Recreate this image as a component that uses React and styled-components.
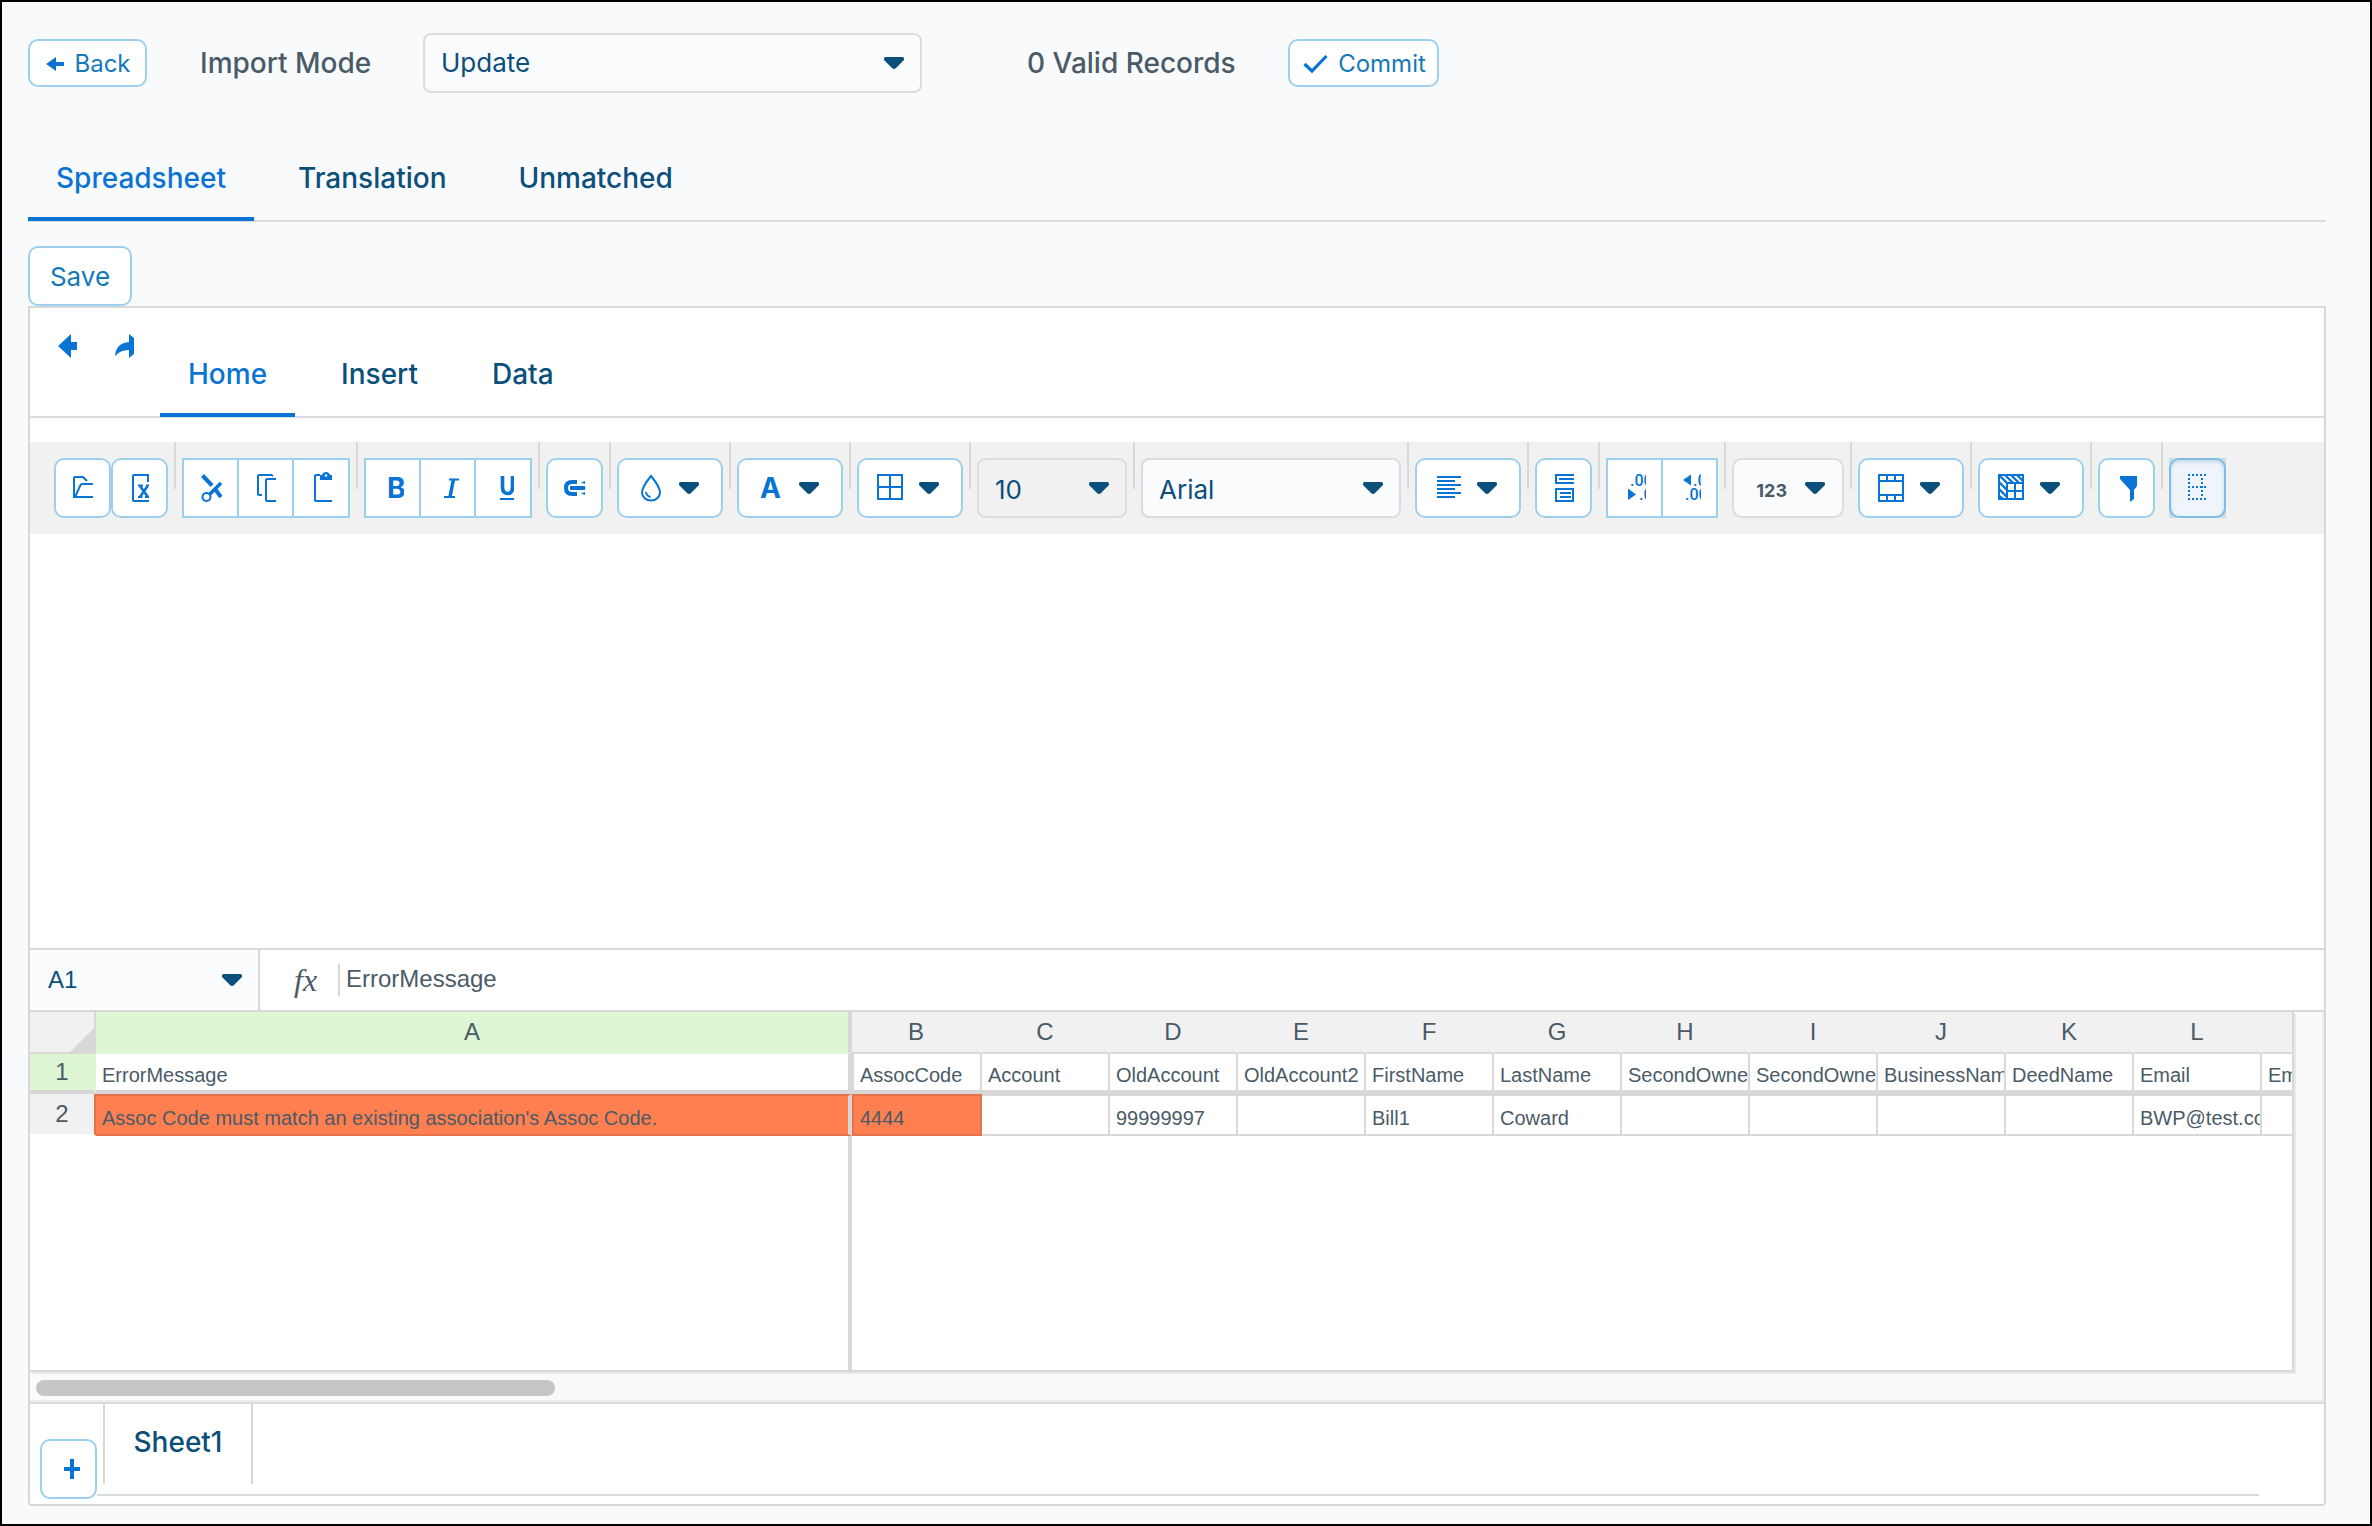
import React, { useState } from "react";
import styled, { createGlobalStyle, css } from "styled-components";

const c = {
  page: "#f9fafc",
  line: "#d8d8d8",
  coolLine: "#d9dde0",
  blue: "#0a74d4",
  link: "#1479b8",
  navy: "#0b4f7b",
  slate: "#4a5b67",
  buttonLine: "#9dd0ee",
  bar: "#f1f1f1",
  green: "#def6d3",
  error: "#ff7f50",
  errorLine: "#e57248",
};
const ui = `Inter, "Liberation Sans", sans-serif`;
const sheet = `"Liberation Sans", Arial, sans-serif`;

const Global = createGlobalStyle`
  * { box-sizing: border-box; }
  body { margin: 0; background: ${c.page}; font-family: ${ui}; color: ${c.slate}; }
  button, select, input { font-family: inherit; margin: 0; }
  button, select { cursor: pointer; }
  svg { display: block; flex: none; }
`;

const Page = styled.main`
  min-height: 100vh;
  border: 2px solid #000;
  padding: 31px 44px 18px 26px;
  background: ${c.page};
`;

const TopRow = styled.header`
  display: grid;
  grid-template-columns: 172px 223px 499px 366px auto;
  align-items: center;
  justify-content: start;
  height: 60px;
`;
const TopLabel = styled.label`
  font-size: 28px;
  line-height: 34px;
  font-weight: 500;
`;
const RecordCount = styled.span`
  padding-left: 105px;
  font-size: 28px;
  line-height: 34px;
  font-weight: 500;
`;
const buttonFace = css`
  border: 2px solid ${c.buttonLine};
  border-radius: 10px;
  background: #fff;
  color: ${c.link};
`;
const ActionButton = styled.button`
  ${buttonFace}
  display: inline-flex;
  align-items: center;
  justify-content: center;
  justify-self: start;
  gap: 10px;
  width: ${(p) => p.$width}px;
  height: 48px;
  padding: 2px 0 0 2px;
  font-size: 24px;
  line-height: 30px;
`;
const SaveButton = styled.button`
  ${buttonFace}
  display: block;
  width: 104px;
  height: 60px;
  margin-top: 24px;
  padding: 2px 0 0;
  font-size: 26px;
  line-height: 32px;
`;

const SelectBox = styled.span`
  position: relative;
  display: flex;
  align-items: center;
  width: ${(p) => (p.$width ? p.$width + "px" : "100%")};
  flex: none;
  > svg {
    position: absolute;
    right: ${(p) => p.$inset || 18}px;
    pointer-events: none;
  }
`;
const Select = styled.select`
  appearance: none;
  width: 100%;
  height: 60px;
  padding: 0 50px 0 16px;
  border: 2px solid ${c.coolLine};
  border-radius: 8px;
  background: ${(p) => (p.$flat ? c.bar : "#fafbfd")};
  color: ${c.navy};
  font-size: 26px;
  line-height: 32px;
`;

const Tabs = styled.div`
  display: flex;
  gap: ${(p) => p.$gap}px;
  height: 89px;
  border-bottom: 2px solid ${(p) => (p.$bare ? "transparent" : c.coolLine)};
  margin-top: ${(p) => p.$top || 0}px;
`;
const Tab = styled.button`
  height: 88px;
  padding: 2px 28px 0;
  border: 0;
  border-bottom: 4px solid ${(p) => (p.$active ? c.blue : "transparent")};
  border-top: 4px solid transparent;
  background: none;
  color: ${(p) => (p.$active ? c.blue : c.navy)};
  font-size: 28px;
  line-height: 34px;
  font-weight: 500;
`;

const Panel = styled.section`
  border: 2px solid ${c.line};
  border-radius: 0 0 4px 4px;
  background: #fff;
`;
const RibbonHead = styled.div`
  display: flex;
  align-items: flex-end;
  height: 110px;
  padding-left: 10px;
  border-bottom: 2px solid ${c.coolLine};
`;
const History = styled.div`
  display: flex;
  align-self: flex-start;
  margin-right: 6px;
`;
const HistoryButton = styled.button`
  width: 57px;
  height: 76px;
  padding: 0 0 0 10px;
  border: 0;
  background: none;
  color: ${c.blue};
`;
const RibbonTabs = styled(Tabs)`
  margin-bottom: -2px;
`;

const Toolbar = styled.div`
  display: flex;
  align-items: flex-start;
  height: 92px;
  margin-top: 24px;
  padding: 16px 24px;
  background: ${c.bar};
  select { padding-top: 3px; }
`;
const Separator = styled.span`
  flex: none;
  width: 2px;
  height: 47px;
  margin: -16px 6px 0;
  background: ${c.line};
`;
const Pair = styled.div`
  display: flex;
`;
const ToolButton = styled.button`
  ${buttonFace}
  flex: none;
  display: flex;
  align-items: center;
  width: 57px;
  height: 60px;
  padding: 0 0 0 10px;
  color: ${c.blue};
  ${(p) =>
    p.$pressed &&
    css`
      border-color: #7fbde3;
      background: #eff5fa;
      box-shadow: inset 0 2px 4px #c3d9e8;
    `}
`;
const Group = styled.div`
  display: flex;
  ${ToolButton} {
    border-radius: 0;
  }
  ${ToolButton} + ${ToolButton} {
    width: 55px;
    border-left: 0;
  }
  ${ToolButton}:nth-child(3) {
    width: 56px;
  }
`;
const PressedFrame = styled.span`
  flex: none;
  background: #c8dcea;
`;
const DropButton = styled(ToolButton)`
  width: 106px;
  gap: 12px;
  padding-left: 16px;
`;
const FormatButton = styled(DropButton)`
  width: 112px;
  justify-content: flex-end;
  gap: 18px;
  padding: 6px 17px 0 0;
  border-color: ${c.coolLine};
  background: #fafbfd;
  color: ${c.slate};
  font-size: 18px;
  line-height: 24px;
  font-weight: 700;
  svg { margin-bottom: 6px; }
`;

const Blank = styled.div`
  height: 414px;
`;

const FormulaBar = styled.div`
  display: flex;
  align-items: center;
  height: 64px;
  border-top: 2px solid ${c.line};
  border-bottom: 2px solid ${c.line};
`;
const NameBox = styled(SelectBox)`
  height: 60px;
  border-right: 2px solid ${c.line};
  padding: 2px;
`;
const NameSelect = styled(Select)`
  height: 56px;
  border: 0;
  border-radius: 0;
  font-family: ${sheet};
  font-size: 24px;
`;
const Fx = styled.label`
  width: 78px;
  padding-left: 34px;
  font: italic 32px/32px "Liberation Serif", serif;
`;
const FormulaInput = styled.input`
  flex: 1;
  height: 32px;
  padding: 0 0 3px 6px;
  border: 0;
  border-left: 2px solid ${c.line};
  outline: 0;
  background: none;
  color: ${c.slate};
  && { font-family: ${sheet}; }
  font-size: 24px;
`;

const SheetArea = styled.div`
  padding-right: 28px;
  border-right: 2px solid #ededed;
  border-bottom: 2px solid #ededed;
  background: #fafafa;
`;
const Pane = styled.div`
  overflow: hidden;
  height: 360px;
  border-right: 2px solid ${c.line};
  border-bottom: 2px solid ${c.line};
  box-shadow: 2px 2px 0 #e8e8e8;
  background: #fff;
`;
const Grid = styled.table`
  table-layout: fixed;
  width: 2360px;
  border-collapse: separate;
  border-spacing: 0;
  font-family: ${sheet};
  color: ${c.slate};
`;
const Col = styled.col`
  width: ${(p) => p.$width}px;
`;
const headCell = css`
  padding: 0;
  font-size: 24px;
  line-height: 28px;
  font-weight: 400;
  text-align: center;
  vertical-align: middle;
  background: ${(p) => (p.$on ? c.green : c.bar)};
`;
const Corner = styled.td`
  ${headCell}
  height: 42px;
  border-right: 2px solid ${c.line};
  border-bottom: 2px solid ${c.line};
  vertical-align: bottom;
  svg { margin-left: auto; }
`;
const ColHead = styled.th`
  ${headCell}
  height: 42px;
  border-bottom: 2px solid ${(p) => (p.$on ? c.green : c.line)};
  border-right: ${(p) => (p.$on ? `4px solid ${c.line}` : `2px solid ${c.bar}`)};
`;
const RowHead = styled.th`
  ${headCell}
  border-right: 2px solid ${(p) => (p.$on ? c.green : c.errorLine)};
  border-bottom: ${(p) => (p.$on ? `4px solid ${c.line}` : "2px solid #fff")};
`;
const Cell = styled.td`
  height: ${(p) => (p.$top ? 40 : 42)}px;
  padding: 0 0 ${(p) => (p.$top ? 3 : 4)}px 6px;
  overflow: hidden;
  white-space: nowrap;
  vertical-align: bottom;
  font-size: 20px;
  line-height: 24px;
  border: 0 solid ${c.line};
  border-right-width: 2px;
  border-bottom-width: ${(p) => (p.$top ? 4 : 2)}px;
  border-top-width: ${(p) => (p.$top ? 0 : 2)}px;
  &:nth-child(2) { border-right-width: 4px; }
  &:nth-child(3) { border-left-width: 2px; }
  ${(p) =>
    p.$error &&
    css`
      background: ${c.error};
      border-top-color: ${c.errorLine};
      border-bottom-color: ${c.errorLine};
      &:nth-child(3) { border-color: ${c.errorLine}; }
    `}
`;
const Rest = styled.td`
  height: 236px;
  padding: 0;
  border-right: ${(p) => (p.$frozen ? `4px solid ${c.line}` : 0)};
`;
const Track = styled.div`
  height: 28px;
  padding: 8px 6px 4px;
`;
const Thumb = styled.div`
  width: 519px;
  height: 16px;
  border-radius: 8px;
  background: #c6c6c6;
`;

const SheetBar = styled.footer`
  display: flex;
  height: 102px;
  padding: 0 65px 0 10px;
  border-top: 2px solid ${c.coolLine};
`;
const AddSheet = styled(ToolButton)`
  margin-top: 35px;
`;
const SheetStrip = styled.div`
  flex: 1;
  height: 92px;
  padding-left: 6px;
  border-bottom: 2px solid ${c.coolLine};
`;
const SheetTab = styled.button`
  width: 150px;
  height: 80px;
  padding: 0 0 4px;
  border: 0 solid ${c.line};
  border-width: 0 2px;
  background: #fff;
  color: ${c.navy};
  font-size: 28px;
  line-height: 34px;
  font-weight: 500;
`;

const Caret = () => (
  <svg width="20" height="12" viewBox="0 0 20 12" fill={c.navy} aria-hidden="true">
    <path d="M1.5 0H18.5Q20 0 20 1.6V3L12 11Q10 13 8 11L0 3V1.6Q0 0 1.5 0Z" />
  </svg>
);
const Glyph = ({ wide, children }) => (
  <svg
    width={wide ? 32 : 28}
    height="32"
    viewBox={wide ? "0 0 32 32" : "0 0 28 32"}
    fill="none"
    stroke="currentColor"
    strokeWidth="2"
    aria-hidden="true"
  >
    {children}
  </svg>
);
const Letters = ({ x, y, size, light, children }) => (
  <text
    x={x}
    y={y}
    fontSize={size}
    fontWeight={light ? 500 : 700}
    fill="currentColor"
    stroke="none"
    fontFamily={light ? "Roboto, sans-serif" : "Inter, sans-serif"}
  >
    {children}
  </text>
);

const icons = {
  undo: <path d="M8 16 21 4V12H27V20H21V28Z" fill="currentColor" stroke="none" />,
  redo: <path d="M22 4 27 8V24L22 28V20Q13 20 8 26Q9 13 22 12Z" fill="currentColor" stroke="none" />,
  open: <path d="M27 25H8V6Q8 5 9 5H17L21 9M9 25 14.500 13Q15 12 16 12H27" />,
  excel: (
    <>
      <path d="M26 29H11Q10 29 10 28V4Q10 3 11 3H25V10" />
      <path d="M17 14 25 25M24.500 14 17 25" strokeWidth="2.600" />
      <path d="M15 13.500H20M23 13.500H26M15 25H19.500M22 25H26" />
    </>
  ),
  cut: (
    <>
      <path d="M8.500 3.500 18 13.500" strokeWidth="4" />
      <path d="M15.500 22.500 27 11" strokeWidth="3.500" />
      <path d="M21 17 27 25" strokeWidth="4" />
      <circle cx="12.500" cy="25" r="4" />
    </>
  ),
  copy: (
    <>
      <path d="M24 4 22.500 3H10Q9 3 9 4V22Q9 23 10 23H13" />
      <path d="M27 7H18Q17 7 17 8V28Q17 29 18 29H27" />
    </>
  ),
  paste: (
    <>
      <path d="M28 29H12Q11 29 11 28V4Q11 3 12 3H16" />
      <path d="M16 3H18Q19 0 22 0Q25 0 26 3H28V8H16Z" fill="currentColor" stroke="none" />
      <circle cx="22" cy="3.500" r="1.200" fill="#fff" stroke="none" />
    </>
  ),
  bold: <Letters x="11" y="26" size="28">B</Letters>,
  italic: (
    <>
      <path d="M18 7.500H28M13 25H24" />
      <path d="M22.500 7 19 25" strokeWidth="3.500" />
    </>
  ),
  underline: (
    <>
      <path d="M16.500 4V15Q16.500 21.500 22 21.500Q26.500 21.500 26.500 15V4" strokeWidth="3.600" />
      <path d="M14 27H28" />
    </>
  ),
  link: (
    <>
      <path d="M19 10H14Q8 10 8 16Q8 22 14 22H19" strokeWidth="4" />
      <path d="M12 16H27" strokeWidth="4" />
      <path d="M23 10.500 27 9V12ZM23 21.500 27 20V23Z" fill="currentColor" stroke="none" />
    </>
  ),
  drop: (
    <>
      <path d="M16 4Q7 15 7 20.500A9 8 0 0 0 25 20.500Q25 15 16 4Z" />
      <path d="M11 20Q11.500 24 15.500 25" />
    </>
  ),
  letter: <Letters x="5" y="26" size="28">A</Letters>,
  borders: <path d="M3 3H27V27H3ZM15 3V27M3 15H27" />,
  align: <path d="M4 5H28M4 9H22M4 13H28M4 17H22M4 21H28M4 25H22" />,
  merge: (
    <>
      <path d="M27 3H9V11H27M12 7H27" />
      <path d="M9 17H26V29H9ZM13 21H24M13 25H24" />
    </>
  ),
  lessDecimal: (
    <>
      <Letters light x="12" y="14" size="16">.00</Letters>
      <path d="M10 16.500 18 22.500 10 28Z" fill="currentColor" stroke="none" />
      <Letters light x="21" y="28" size="16">.0</Letters>
    </>
  ),
  moreDecimal: (
    <>
      <path d="M18 2.500 10 8 18 13.500Z" fill="currentColor" stroke="none" />
      <Letters light x="20" y="14" size="16">.0</Letters>
      <Letters light x="12" y="28" size="16">.00</Letters>
    </>
  ),
  table: <path d="M3 3H27V29H3ZM3 9H27M3 23H27M11 3V9M19 3V9M11 23V29M19 23V29" />,
  hatch: (
    <>
      <path d="M3 3H27V27H3ZM11 11H27M11 11V27M19 11V27M11 19H27" />
      <path d="M3 3 11 11M9 3 17 11M15 3 23 11M21 3 27 9M3 10 11 18M3 17 11 25M3 24 7 27" strokeWidth="2.400" />
    </>
  ),
  filter: <path d="M10 4H27V14L24 18V27L20 30V18L10 7Z" fill="currentColor" stroke="none" />,
  gridlines: <path d="M7 3H26M7 15H26M7 27H26M8 6V25M21 6V25" strokeDasharray="2 2" />,
  plus: <path d="M20 6V26M12 16H28" strokeWidth="4" />,
};

const Tool = ({ icon, label, ...rest }) => (
  <ToolButton aria-label={label} {...rest}>
    <Glyph>{icons[icon]}</Glyph>
  </ToolButton>
);
const DropTool = ({ icon, label }) => (
  <DropButton aria-label={label} aria-haspopup="menu">
    <Glyph wide>{icons[icon]}</Glyph>
    <Caret />
  </DropButton>
);

const columns = "ABCDEFGHIJKLM".split("");
const headings = [
  "ErrorMessage", "AssocCode", "Account", "OldAccount", "OldAccount2", "FirstName", "LastName",
  "SecondOwner", "SecondOwner", "BusinessName", "DeedName", "Email", "Email2",
];
const record = [
  "Assoc Code must match an existing association's Assoc Code.", "4444", "", "99999997", "", "Bill1",
  "Coward", "", "", "", "", "BWP@test.com", "",
];

export default function App() {
  const [view, setView] = useState("Spreadsheet");
  const [ribbon, setRibbon] = useState("Home");
  const [formula, setFormula] = useState("ErrorMessage");

  return (
    <>
      <Global />
      <Page>
        <TopRow>
          <ActionButton $width={119}>
            <svg width="18" height="14" viewBox="0 0 18 14" fill={c.blue} aria-hidden="true">
              <path d="M0 7 10 0V5H18V9H10V14Z" />
            </svg>
            Back
          </ActionButton>
          <TopLabel htmlFor="mode">Import Mode</TopLabel>
          <SelectBox>
            <Select id="mode">
              <option>Update</option>
            </Select>
            <Caret />
          </SelectBox>
          <RecordCount>0 Valid Records</RecordCount>
          <ActionButton $width={151}>
            <svg width="25" height="20" viewBox="0 0 25 20" fill="none" stroke={c.blue} strokeWidth="3.200" aria-hidden="true">
              <path d="M1.500 10 9 17 23.500 2" />
            </svg>
            Commit
          </ActionButton>
        </TopRow>

        <Tabs role="tablist" $top={40} $gap={16}>
          {["Spreadsheet", "Translation", "Unmatched"].map((name) => (
            <Tab key={name} role="tab" aria-selected={view === name} $active={view === name} onClick={() => setView(name)}>
              {name}
            </Tab>
          ))}
        </Tabs>

        <SaveButton>Save</SaveButton>

        <Panel>
          <RibbonHead>
            <History>
              <HistoryButton aria-label="Undo"><Glyph>{icons.undo}</Glyph></HistoryButton>
              <HistoryButton aria-label="Redo"><Glyph>{icons.redo}</Glyph></HistoryButton>
            </History>
            <RibbonTabs role="tablist" $bare $gap={18}>
              {["Home", "Insert", "Data"].map((name) => (
                <Tab key={name} role="tab" aria-selected={ribbon === name} $active={ribbon === name} onClick={() => setRibbon(name)}>
                  {name}
                </Tab>
              ))}
            </RibbonTabs>
          </RibbonHead>

          <Toolbar role="toolbar" aria-label="Formatting">
            <Pair>
              <Tool icon="open" label="Open" />
              <Tool icon="excel" label="Export to Excel" />
            </Pair>
            <Separator />
            <Group>
              <Tool icon="cut" label="Cut" />
              <Tool icon="copy" label="Copy" />
              <Tool icon="paste" label="Paste" />
            </Group>
            <Separator />
            <Group>
              <Tool icon="bold" label="Bold" />
              <Tool icon="italic" label="Italic" />
              <Tool icon="underline" label="Underline" />
            </Group>
            <Separator />
            <Tool icon="link" label="Hyperlink" />
            <Separator />
            <DropTool icon="drop" label="Background" />
            <Separator />
            <DropTool icon="letter" label="Text Color" />
            <Separator />
            <DropTool icon="borders" label="Borders" />
            <Separator />
            <SelectBox $width={150}>
              <Select $flat aria-label="Font Size"><option>10</option></Select>
              <Caret />
            </SelectBox>
            <Separator />
            <SelectBox $width={260}>
              <Select aria-label="Font"><option>Arial</option></Select>
              <Caret />
            </SelectBox>
            <Separator />
            <DropTool icon="align" label="Alignment" />
            <Separator />
            <Tool icon="merge" label="Text Wrap" />
            <Separator />
            <Group>
              <Tool icon="lessDecimal" label="Decrease Decimal" />
              <Tool icon="moreDecimal" label="Increase Decimal" />
            </Group>
            <Separator />
            <FormatButton aria-haspopup="menu">
              123
              <Caret />
            </FormatButton>
            <Separator />
            <DropTool icon="table" label="Merge Cells" />
            <Separator />
            <DropTool icon="hatch" label="Freeze Panes" />
            <Separator />
            <Tool icon="filter" label="Filter" />
            <Separator />
            <PressedFrame>
              <Tool icon="gridlines" label="Toggle Gridlines" aria-pressed="true" $pressed />
            </PressedFrame>
          </Toolbar>

          <Blank />

          <FormulaBar>
            <NameBox $width={230} $inset={16}>
              <NameSelect aria-label="Name Box"><option>A1</option></NameSelect>
              <Caret />
            </NameBox>
            <Fx htmlFor="formula">fx</Fx>
            <FormulaInput id="formula" value={formula} onChange={(e) => setFormula(e.target.value)} />
          </FormulaBar>

          <SheetArea>
            <Pane>
              <Grid>
                <colgroup>
                  <Col $width={66} />
                  <Col $width={756} />
                  <Col $width={130} />
                  {columns.slice(2).map((name) => <Col key={name} $width={128} />)}
                </colgroup>
                <thead>
                  <tr>
                    <Corner>
                      <svg width="24" height="24" viewBox="0 0 24 24" fill={c.line} aria-hidden="true"><path d="M24 0V24H0Z" /></svg>
                    </Corner>
                    {columns.map((name) => <ColHead key={name} scope="col" $on={name === "A"}>{name}</ColHead>)}
                  </tr>
                </thead>
                <tbody>
                  <tr>
                    <RowHead scope="row" $on>1</RowHead>
                    {headings.map((text, i) => <Cell key={i} $top>{text}</Cell>)}
                  </tr>
                  <tr>
                    <RowHead scope="row">2</RowHead>
                    {record.map((text, i) => <Cell key={i} $error={i < 2}>{text}</Cell>)}
                  </tr>
                  <tr>
                    <Rest />
                    <Rest $frozen />
                    <Rest colSpan={12} />
                  </tr>
                </tbody>
              </Grid>
            </Pane>
            <Track><Thumb /></Track>
          </SheetArea>

          <SheetBar>
            <AddSheet aria-label="Add Sheet"><Glyph>{icons.plus}</Glyph></AddSheet>
            <SheetStrip>
              <SheetTab>Sheet1</SheetTab>
            </SheetStrip>
          </SheetBar>
        </Panel>
      </Page>
    </>
  );
}
